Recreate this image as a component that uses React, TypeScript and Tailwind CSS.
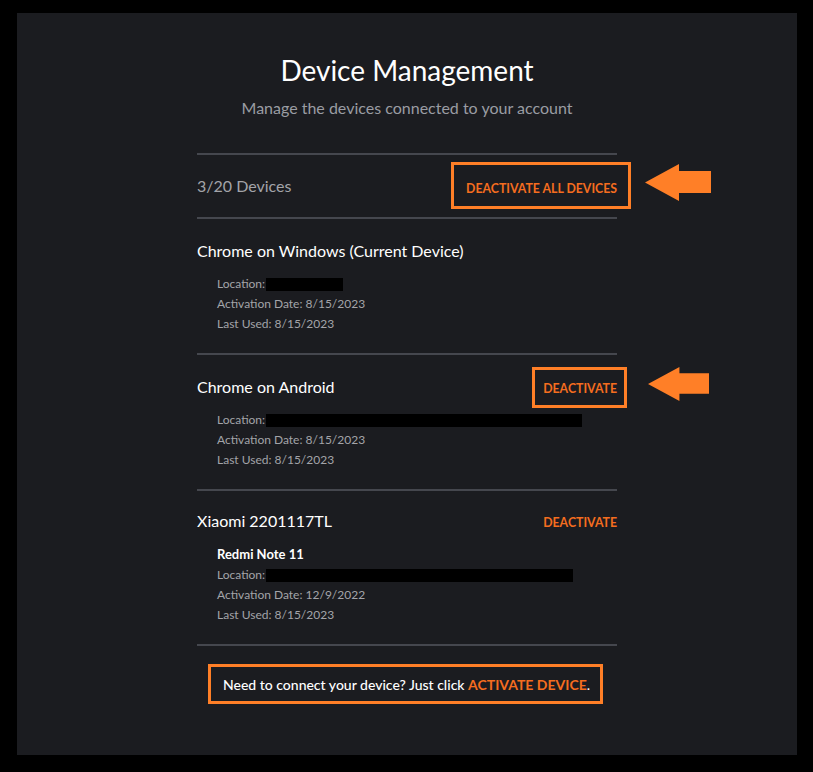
const ORANGE = 'text-[#f56d1f]';

function Arrow({ className }: { className?: string }) {
  return (
    <svg className={className} viewBox="0 0 66 37" fill="#ff7f27">
      <path d="M0 18.5 L34 0 L34 7 L66 7 L66 29 L34 29 L34 37 Z" />
    </svg>
  );
}

function Redacted({ w }: { w: number }) {
  return <span className="inline-block h-[13px] bg-black align-middle ml-px" style={{ width: w }} />;
}

interface Device {
  name: string;
  model?: string;
  locationWidth: number;
  activated: string;
  lastUsed: string;
  current?: boolean;
  annotate?: boolean;
}

const DEVICES: Device[] = [
  { name: 'Chrome on Windows (Current Device)', locationWidth: 77, activated: '8/15/2023', lastUsed: '8/15/2023', current: true },
  { name: 'Chrome on Android', locationWidth: 316, activated: '8/15/2023', lastUsed: '8/15/2023', annotate: true },
  { name: 'Xiaomi 2201117TL', model: 'Redmi Note 11', locationWidth: 307, activated: '12/9/2022', lastUsed: '8/15/2023' },
];

function DeviceRow({ device }: { device: Device }) {
  return (
    <div className={`${device.model ? 'pt-[18px]' : 'pt-5'} pb-[19px] border-b-2 border-[#45474e]`}>
      <div className="flex items-center justify-between h-6">
        <span className="text-[16px] text-white">{device.name}</span>
        {!device.current && (
          <span className="relative">
            <span className={`text-[12.3px] font-bold ${ORANGE} leading-4`}>DEACTIVATE</span>
            {device.annotate && (
              <>
                <span className="absolute -left-[11px] -right-[10px] -top-[8px] -bottom-[9px] border-[3px] border-[#ff7f27]" />
                <Arrow className="absolute left-[105px] -top-[9px] w-[61px] h-[36px]" />
              </>
            )}
          </span>
        )}
      </div>
      <div className="mt-[11px] pl-5 text-[12px] leading-5 text-[#a3a4a9]">
        {device.model && <div className="text-[13px] font-bold text-white leading-[21px]">{device.model}</div>}
        <div>
          Location:
          <Redacted w={device.locationWidth} />
        </div>
        <div>Activation Date: {device.activated}</div>
        <div>Last Used: {device.lastUsed}</div>
      </div>
    </div>
  );
}

export default function App() {
  return (
    <div className="w-[813px] h-[772px] bg-black pt-[13px] pl-[17px]" style={{ fontFamily: 'Lato, "Open Sans", sans-serif' }}>
      <div className="w-[780px] h-[742px] bg-[#1b1c20] pt-10">
        <h1 className="text-center text-[28px] leading-[34px] text-white">Device Management</h1>
        <p className="mt-[9px] text-center text-[16px] leading-6 text-[#9a9ca3]">
          Manage the devices connected to your account
        </p>

        <div className="ml-[180px] w-[420px] mt-[33px]">
          <div className="border-t-2 border-b-2 border-[#45474e] h-[66px] flex items-center justify-between">
            <span className="text-[16px] text-[#a3a4a9]">3/20 Devices</span>
            <span className="relative mt-[1px]">
              <span className={`text-[12.3px] font-bold ${ORANGE} leading-4`}>DEACTIVATE ALL DEVICES</span>
              <span className="absolute -left-[15px] -right-[14px] -top-[13px] -bottom-[10px] border-[3px] border-[#ff7f27]" />
              <Arrow className="absolute -right-[94px] -top-[11px] w-[66px] h-[37px]" />
            </span>
          </div>

          {DEVICES.map(d => (
            <DeviceRow key={d.name} device={d} />
          ))}

          <div className="flex justify-center mt-[18px] -ml-[3px]">
            <div className="border-[3px] border-[#ff7f27] w-[395px] h-[40px] flex items-center pl-3">
              <span className="text-[14px] text-white font-medium">
                Need to connect your device? Just click{' '}
                <span className={`font-bold ${ORANGE}`}>ACTIVATE DEVICE</span>.
              </span>
            </div>
          </div>
        </div>
      </div>
    </div>
  );
}
